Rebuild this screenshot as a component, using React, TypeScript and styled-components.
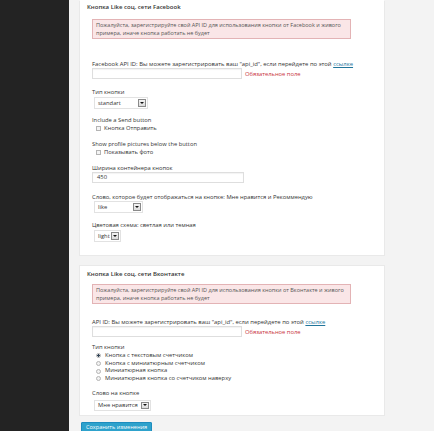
import React from "react";
import styled, { createGlobalStyle } from "styled-components";

const Global = createGlobalStyle`
  html, body { margin: 0; padding: 0; background: #fff; }
  body { font-family: "Open Sans", "Noto Sans", sans-serif; color: #444; }
  * { box-sizing: border-box; }
`;

const Layout = styled.div`
  display: flex;
  width: 434px;
  height: 431px;
  overflow: hidden;
`;

const Sidebar = styled.div`
  width: 69px;
  flex: none;
  background: #232323;
`;

const Main = styled.div`
  flex: 1;
  background: #f3f3f3;
  padding-left: 10px;
  display: flex;
  flex-direction: column;
  align-items: flex-start;
`;

const Panel = styled.section<{ $top: number; $bottom: number; $mt: number }>`
  width: 306px;
  background: #fff;
  border: 1px solid #e9e9e9;
  border-top-color: ${(p) => (p.$mt ? "#e9e9e9" : "transparent")};
  margin-top: ${(p) => p.$mt}px;
  padding: ${(p) => p.$top}px 0 ${(p) => p.$bottom}px 0;
  display: flex;
  flex-direction: column;
  align-items: flex-start;
`;

const Title = styled.h3`
  margin: 0 0 0 7px;
  font-size: 6px;
  line-height: 8px;
  font-weight: 600;
  color: #333;
  white-space: nowrap;
`;

const Notice = styled.div<{ $mt: number }>`
  margin: ${(p) => p.$mt}px 0 0 12px;
  width: 259px;
  background: #fae6e7;
  border: 1px solid #e3b3b5;
  padding: 1px 3px;
  font-size: 5.5px;
  line-height: 8px;
  color: #555;
  white-space: nowrap;
  overflow: hidden;
`;

const Label = styled.div<{ $mt: number }>`
  margin: ${(p) => p.$mt}px 0 0 12px;
  font-size: 5.8px;
  line-height: 8px;
  color: #333;
  white-space: nowrap;
`;

const WideLabel = styled(Label)`
  font-size: 5.9px;
`;

const Link = styled.a`
  color: #21759b;
  text-decoration: underline;
`;

const FieldRow = styled.div<{ $mt: number }>`
  margin: ${(p) => p.$mt}px 0 0 12px;
  display: flex;
  align-items: center;
  gap: 3px;
`;

const TextInput = styled.div<{ $w: number }>`
  width: ${(p) => p.$w}px;
  height: 11px;
  border: 1px solid #dedede;
  box-shadow: inset 0 1px 1px rgba(0, 0, 0, 0.05);
  background: #fff;
  font-size: 5.8px;
  line-height: 9px;
  padding-left: 4px;
  color: #333;
`;

const Required = styled.span`
  font-size: 5.8px;
  color: #c8323a;
  margin-top: 1px;
`;

const Select = styled.div<{ $w: number; $h: number; $mt: number }>`
  margin: ${(p) => p.$mt}px 0 0 14px;
  width: ${(p) => p.$w}px;
  height: ${(p) => p.$h}px;
  border: 1px solid #e2e2e2;
  background: #fff;
  display: flex;
  align-items: center;
  justify-content: space-between;
  padding: 0 1px 0 3px;
  font-size: 5.8px;
  color: #333;
`;

const Arrow = styled.span`
  width: 8px;
  height: calc(100% - 2px);
  border: 1px solid #8a8a8a;
  background: linear-gradient(#f4f4f4, #dcdcdc);
  display: flex;
  align-items: center;
  justify-content: center;
  &::after {
    content: "";
    border-left: 2px solid transparent;
    border-right: 2px solid transparent;
    border-top: 2.5px solid #111;
  }
`;

const CheckRow = styled.label<{ $mt: number }>`
  margin: ${(p) => p.$mt}px 0 0 16px;
  display: flex;
  align-items: center;
  gap: 3px;
  font-size: 5.8px;
  line-height: 8px;
  height: 8px;
  color: #333;
`;

const Box = styled.span`
  width: 5px;
  height: 5px;
  border: 1px solid #b4b4b4;
  background: #f4f4f4;
`;

const RadioList = styled.div<{ $mt: number }>`
  margin: ${(p) => p.$mt}px 0 0 16px;
  display: flex;
  flex-direction: column;
`;

const RadioRow = styled.label`
  display: flex;
  align-items: center;
  gap: 4px;
  font-size: 5.8px;
  line-height: 7.7px;
  height: 7.7px;
  color: #333;
`;

const Radio = styled.span<{ $on?: boolean }>`
  width: 5px;
  height: 5px;
  border-radius: 50%;
  border: 1px solid #b4b4b4;
  background: ${(p) => (p.$on ? "radial-gradient(circle, #345 0 1.1px, #e8eef4 1.3px)" : "#f2f2f2")};
`;

const SaveButton = styled.button`
  margin: 6px 0 0 2px;
  width: 71px;
  height: 11px;
  padding: 0;
  background: #2ea2cc;
  border: 1px solid #1e8cbe;
  color: #fff;
  font-family: "Open Sans", "Noto Sans", sans-serif;
  font-size: 5.6px;
  line-height: 9px;
  border-radius: 1px;
`;

export default function App() {
  return (
    <>
      <Global />
      <Layout>
        <Sidebar />
        <Main>
          <Panel $top={2} $bottom={13} $mt={0}>
            <Title>Кнопка Like соц. сети Facebook</Title>
            <Notice $mt={8}>
              Пожалуйста, зарегистрируйте свой API ID для использования кнопки от Facebook и живого
              <br />
              примера, иначе кнопка работать не будет
            </Notice>
            <WideLabel $mt={21}>
              Facebook API ID: Вы можете зарегистрировать ваш "api_id", если перейдете по этой{" "}
              <Link>ссылке</Link>
            </WideLabel>
            <FieldRow $mt={0}>
              <TextInput $w={150} />
              <Required>Обязательное поле</Required>
            </FieldRow>
            <Label $mt={9}>Тип кнопки</Label>
            <Select $w={54} $h={12} $mt={1}>
              standart
              <Arrow />
            </Select>
            <Label $mt={7}>Include a Send button</Label>
            <CheckRow $mt={0}>
              <Box />
              Кнопка Отправить
            </CheckRow>
            <Label $mt={8}>Show profile pictures below the button</Label>
            <CheckRow $mt={0}>
              <Box />
              Показывать фото
            </CheckRow>
            <Label $mt={8}>Ширина контейнера кнопок</Label>
            <FieldRow $mt={0}>
              <TextInput $w={152}>450</TextInput>
            </FieldRow>
            <Label $mt={10}>
              Слово, которое будет отображаться на кнопке: Мне нравится и Рекоммендую
            </Label>
            <Select $w={49} $h={12} $mt={0}>
              like
              <Arrow />
            </Select>
            <Label $mt={8}>Цветовая схема: светлая или темная</Label>
            <Select $w={27} $h={12} $mt={1}>
              light
              <Arrow />
            </Select>
          </Panel>

          <Panel $top={4} $bottom={4} $mt={9}>
            <Title>Кнопка Like соц. сети Вконтакте</Title>
            <Notice $mt={6}>
              Пожалуйста, зарегистрируйте свой API ID для использования кнопки от Вконтакте и живого
              <br />
              примера, иначе кнопка работать не будет
            </Notice>
            <WideLabel $mt={14}>
              API ID: Вы можете зарегистрировать ваш "api_id", если перейдете по этой{" "}
              <Link>ссылке</Link>
            </WideLabel>
            <FieldRow $mt={0}>
              <TextInput $w={150} />
              <Required>Обязательное поле</Required>
            </FieldRow>
            <Label $mt={6}>Тип кнопки</Label>
            <RadioList $mt={1}>
              <RadioRow>
                <Radio $on />
                Кнопка с текстовым счетчиком
              </RadioRow>
              <RadioRow>
                <Radio />
                Кнопка с миниатюрным счетчиком
              </RadioRow>
              <RadioRow>
                <Radio />
                Миниатюрная кнопка
              </RadioRow>
              <RadioRow>
                <Radio />
                Миниатюрная кнопка со счетчиком наверху
              </RadioRow>
            </RadioList>
            <Label $mt={6}>Слово на кнопке</Label>
            <Select $w={57} $h={11} $mt={3}>
              Мне нравится
              <Arrow />
            </Select>
          </Panel>
          <SaveButton>Сохранить изменения</SaveButton>
        </Main>
      </Layout>
    </>
  );
}
